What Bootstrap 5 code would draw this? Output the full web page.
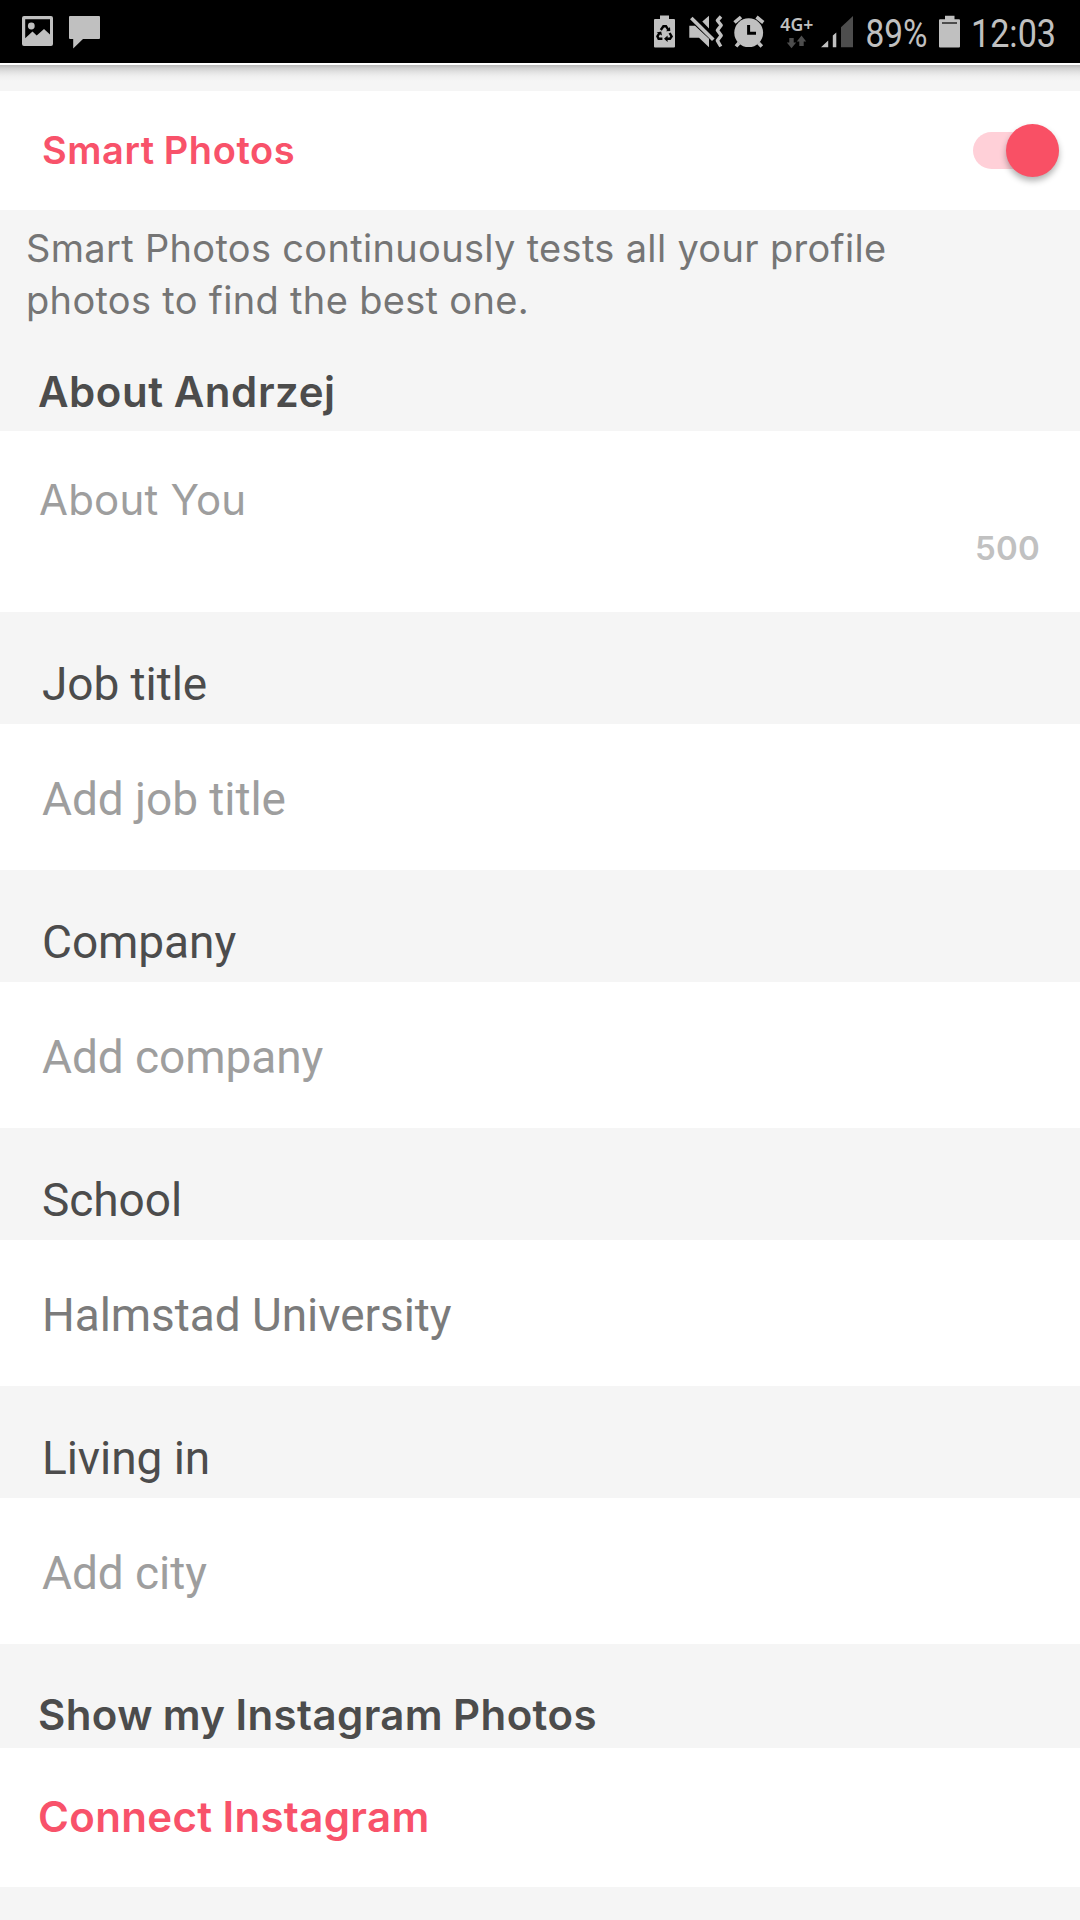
<!DOCTYPE html>
<html lang="en">
<head>
<meta charset="utf-8">
<meta name="viewport" content="width=device-width, initial-scale=1">
<title>Edit profile</title>
<link href="https://cdn.jsdelivr.net/npm/bootstrap@5.3.0/dist/css/bootstrap.min.css" rel="stylesheet">
<style>
  body { background: #f5f5f5; font-family: Inter, "Noto Sans", sans-serif; color: #4c4c4c; }
  .screen { width: 1080px; height: 1920px; }
  .status-bar { height: 63px; background: #000; }
  .status-bar text { font-family: Roboto, sans-serif; fill: #c0c0c0; }
  .status-bar .net { font-family: "Noto Sans", sans-serif; }
  .toolbar-edge { height: 28px; border-top: 2px solid #fff;
    background: linear-gradient(#b9b9b9 0, #cfcfcf 3px, #e2e2e2 7px, #efefef 11px, #f5f5f5 16px); }
  .pink { color: #f8526a; }
  .semi { font-weight: 600; letter-spacing: .55px; word-spacing: -1px; }
  .smart-row { height: 119px; padding: 0 21px 0 42px; font-size: 38px; }
  .track { width: 86px; height: 37px; border-radius: 19px; background: #ffd0d8; }
  .thumb { right: 0; top: -8px; width: 53px; height: 53px; background: #f95065; box-shadow: 0 4px 6px rgba(0,0,0,.3); }
  .blurb { padding: 12px 26px 0; font-size: 38px; line-height: 52px; letter-spacing: .32px; color: #757575; }
  .heading { font-size: 42px; line-height: 54px; padding-left: 38px; }
  .about-head { height: 105px; padding-bottom: 12px; }
  .about-box { height: 181px; padding: 42px 40px 0 39px; font-size: 42px; line-height: 54px; letter-spacing: .2px; color: #9e9e9e; }
  .counter { margin-top: -1px; font-size: 33px; line-height: 44px; font-weight: 600; color: #c1c1c1; }
  .field-label { height: 112px; padding: 0 42px 13px; font: 46px/54px Roboto, sans-serif; letter-spacing: -.06px; }
  .field-value { height: 146px; padding: 48px 42px 0; font: 46px/54px Roboto, sans-serif; letter-spacing: -.06px; color: #9e9e9e; }
  .field-value.filled { color: #7b7b7b; }
  .insta-head { height: 104px; padding-bottom: 6px; letter-spacing: .4px; }
  .insta-row { height: 139px; padding-top: 42px; letter-spacing: .35px; }
</style>
</head>
<body>
<div class="screen d-flex flex-column overflow-hidden">
  <header class="status-bar d-flex justify-content-between flex-shrink-0">
    <svg width="120" height="63" fill="#c0c0c0" aria-hidden="true">
      <path fill-rule="evenodd" d="M24 16H51Q53 16 53 18V44Q53 46 51 46H24Q22 46 22 44V18Q22 16 24 16ZM25.2 19.2V38.3L32.5 31.5L36.7 35.6L44 29L50 34.5V19.2Z"/>
      <circle cx="31.3" cy="26" r="3.4"/>
      <path d="M70 16H99Q100 16 100 17V38Q100 39 99 39H83L73.2 48.5V39H70Q69 39 69 38V17Q69 16 70 16Z"/>
    </svg>
    <svg width="440" height="63" viewBox="640 0 440 63" fill="#c0c0c0">
      <path d="M660 15.5H669V19H674Q675 19 675 20V46.5Q675 47.5 674 47.5H655Q654 47.5 654 46.5V20Q654 19 655 19H660Z"/>
      <g fill="none" stroke="#000" stroke-width="2.4">
        <path d="M660.8 30L663.4 26.2H666L668.2 29.6M669.6 33L671.6 36.4L670 38.8H666.4M662.4 38.8H658.6L657.4 36.4L659.4 33"/>
      </g>
      <path fill="#000" d="M666 31.2L670.3 31L670 27ZM667.6 35.4V42L664 38.8ZM656.6 32.6L661.2 31.4L662 35.6Z"/>
      <path d="M689.3 25.7H695L709 38.8V47.2L699 37.7H689.3ZM702.3 21.6L709 15.7V28.6Z"/>
      <path d="M691.3 18L713.3 39.8" stroke="#c0c0c0" stroke-width="3.6" fill="none"/>
      <path d="M721 16.5L717.4 20.5L721.2 25.2L717.4 30.2L721.2 35.4L717.4 40.6L720.8 46.5" stroke="#c0c0c0" stroke-width="3.4" stroke-linejoin="round" fill="none"/>
      <circle cx="748.7" cy="32.7" r="14.4"/>
      <path d="M734.5 22.5L741 17M756.5 17L763.3 22.5M739 43L736 46.4M758.5 43L761.8 46.4" stroke="#c0c0c0" stroke-width="3.6" fill="none"/>
      <path d="M748.6 25V33.2H756" stroke="#000" stroke-width="3" fill="none"/>
      <text class="net" x="780.3" y="31" font-size="17.5" font-weight="600" textLength="33" lengthAdjust="spacingAndGlyphs">4G+</text>
      <path fill="#4d4d4d" d="M789.3 38H793.7V42.5H796.2L791.5 48.2L786.8 42.5H789.3ZM799.3 46V41.5H796.8L801.5 35.6L806.2 41.5H803.7V46Z"/>
      <path d="M821 47.3L828.2 40.4V47.3ZM832.8 35.6L836.3 32.4V47.3H832.8Z"/>
      <path fill="#4d4d4d" d="M841 27.3L853 16V47.3H841Z"/>
      <text x="865.5" y="47" font-size="39.5" textLength="62" lengthAdjust="spacingAndGlyphs">89%</text>
      <path d="M945 15.7H954.5V19.2H959Q960 19.2 960 20.2V46.6Q960 47.6 959 47.6H940Q939 47.6 939 46.6V20.2Q939 19.2 940 19.2H945Z"/>
      <path fill="#4d4d4d" d="M942 22H957V24H942Z"/>
      <text x="971" y="47" font-size="39.5" textLength="85" lengthAdjust="spacingAndGlyphs">12:03</text>
    </svg>
  </header>
  <div class="toolbar-edge flex-shrink-0"></div>

  <main>
    <div class="smart-row bg-white d-flex align-items-center justify-content-between">
      <span class="semi pink">Smart Photos</span>
      <div class="track position-relative" role="switch" aria-checked="true" aria-label="Smart Photos">
        <div class="thumb position-absolute rounded-circle"></div>
      </div>
    </div>
    <p class="blurb mb-0">Smart Photos continuously tests all your profile<br>photos to find the best one.</p>

    <div class="heading semi about-head d-flex align-items-end">About Andrzej</div>
    <div class="about-box bg-white">
      <div>About You</div>
      <div class="counter text-end">500</div>
    </div>

    <div class="field-label d-flex align-items-end">Job title</div>
    <div class="field-value bg-white">Add job title</div>
    <div class="field-label d-flex align-items-end">Company</div>
    <div class="field-value bg-white">Add company</div>
    <div class="field-label d-flex align-items-end">School</div>
    <div class="field-value filled bg-white">Halmstad University</div>
    <div class="field-label d-flex align-items-end">Living in</div>
    <div class="field-value bg-white">Add city</div>

    <div class="heading semi insta-head d-flex align-items-end">Show my Instagram Photos</div>
    <div class="heading semi pink insta-row bg-white">Connect Instagram</div>
  </main>
</div>
<script src="https://cdn.jsdelivr.net/npm/bootstrap@5.3.0/dist/js/bootstrap.bundle.min.js"></script>
</body>
</html>
